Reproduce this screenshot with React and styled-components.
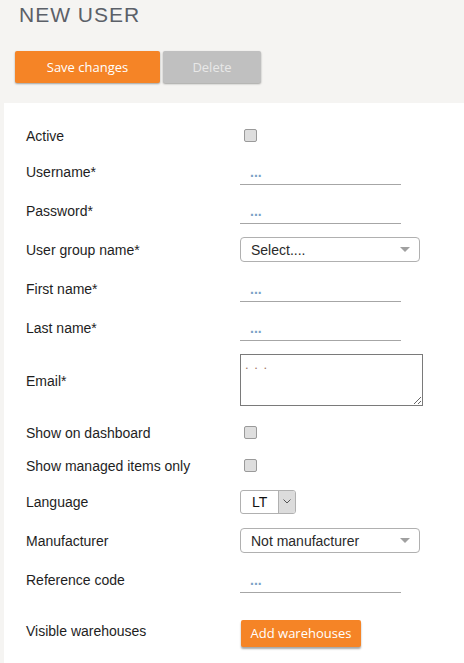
import styled, { createGlobalStyle } from "styled-components";

const GlobalStyle = createGlobalStyle`
  html, body {
    margin: 0;
    padding: 0;
    background: #f5f4f2;
  }
  body {
    font-family: "Liberation Sans", Arial, sans-serif;
  }
  #root {
    min-height: 663px;
    display: flex;
    flex-direction: column;
  }
`;

const fields = [
  { label: "Active", type: "check", h: 33 },
  { label: "Username*", type: "line" },
  { label: "Password*", type: "line" },
  { label: "User group name*", type: "select", value: "Select...." },
  { label: "First name*", type: "line" },
  { label: "Last name*", type: "line" },
  { label: "Email*", type: "area", h: 67 },
  { label: "Show on dashboard", type: "check", h: 33, top: 2 },
  { label: "Show managed items only", type: "check", h: 33 },
  { label: "Language", type: "lang" },
  { label: "Manufacturer", type: "select", value: "Not manufacturer" },
  { label: "Reference code", type: "line" },
  { label: "Visible warehouses", type: "button", top: 12 },
];

const Control = ({ field }) => {
  switch (field.type) {
    case "check":
      return <Check />;
    case "line":
      return <LineInput placeholder="..." />;
    case "select":
      return (
        <Select>
          <span>{field.value}</span>
          <Caret />
        </Select>
      );
    case "area":
      return <Area placeholder=". . ." />;
    case "lang":
      return (
        <LangSelect>
          <span>LT</span>
          <LangButton>
            <svg width="8" height="5" viewBox="0 0 8 5">
              <path d="M0.5 0.5 L4 4 L7.5 0.5" fill="none" stroke="#555" strokeWidth="1" />
            </svg>
          </LangButton>
        </LangSelect>
      );
    case "button":
      return <SmallButton>Add warehouses</SmallButton>;
    default:
      return null;
  }
};

const App = () => {
  return (
    <>
      <GlobalStyle />
      <Header>
        <Title>NEW USER</Title>
        <Toolbar>
          <PrimaryButton>Save changes</PrimaryButton>
          <DisabledButton>Delete</DisabledButton>
        </Toolbar>
      </Header>
      <Panel>
        {fields.map((f) => (
          <Row key={f.label} h={f.h} top={f.top}>
            <Label>{f.label}</Label>
            <Control field={f} />
          </Row>
        ))}
      </Panel>
    </>
  );
};

export default App;

const Header = styled.div`
  padding: 3px 0 0 15px;
`;

const Title = styled.h1`
  margin: 0 0 0 4px;
  font-family: "Liberation Sans", Arial, sans-serif;
  font-weight: normal;
  font-size: 21px;
  line-height: 24px;
  letter-spacing: 1px;
  color: #5b6068;
`;

const Toolbar = styled.div`
  display: flex;
  gap: 3px;
  margin-top: 24px;
  margin-bottom: 20px;
`;

const BaseButton = styled.button`
  border: none;
  border-radius: 2px;
  height: 32px;
  font-family: "Open Sans", "Liberation Sans", sans-serif;
  font-size: 13px;
  padding: 0;
  box-shadow: 0 1px 2px rgba(0, 0, 0, 0.35);
`;

const PrimaryButton = styled(BaseButton)`
  width: 145px;
  background: #f58426;
  color: #fff;
`;

const DisabledButton = styled(BaseButton)`
  width: 98px;
  background: #c0c0c0;
  color: #e8e8e8;
`;

const Panel = styled.div`
  flex: 1;
  background: #fff;
  margin-left: 4px;
  padding: 16px 0 0 22px;
`;

const Row = styled.div`
  display: flex;
  align-items: center;
  height: ${(p) => p.h || 39}px;
  margin-top: ${(p) => p.top || 0}px;
`;

const Label = styled.div`
  width: 214px;
  font-size: 14px;
  color: #1e1e1e;
`;

const Check = styled.span`
  box-sizing: border-box;
  width: 13px;
  height: 13px;
  margin-left: 4px;
  background: #dedede;
  border: 1px solid #9a9a9a;
  border-radius: 2px;
`;

const LineInput = styled.input`
  box-sizing: border-box;
  width: 161px;
  height: 24px;
  margin-top: 2px;
  padding: 0 0 0 10px;
  border: none;
  border-bottom: 1px solid #a6a6a6;
  outline: none;
  font-family: "Liberation Sans", Arial, sans-serif;
  font-size: 14px;
  &::placeholder {
    color: #7aa1c4;
    font-weight: bold;
  }
`;

const Select = styled.div`
  box-sizing: border-box;
  width: 180px;
  height: 25px;
  display: flex;
  align-items: center;
  justify-content: space-between;
  padding: 0 9px 0 10px;
  border: 1px solid #b0b0b0;
  border-radius: 4px;
  font-size: 14px;
  color: #2a2a2a;
`;

const Caret = styled.span`
  width: 0;
  height: 0;
  border-left: 5px solid transparent;
  border-right: 5px solid transparent;
  border-top: 5px solid #a0a0a0;
`;

const Area = styled.textarea`
  box-sizing: border-box;
  width: 183px;
  height: 52px;
  margin-top: -2px;
  padding: 2px 4px;
  border: 1px solid #7a7a7a;
  outline: none;
  font-family: "Liberation Sans", Arial, sans-serif;
  font-size: 13px;
  &::placeholder {
    color: #a07462;
    letter-spacing: 1px;
  }
`;

const LangSelect = styled.div`
  box-sizing: border-box;
  width: 56px;
  height: 24px;
  display: flex;
  align-items: stretch;
  border: 1px solid #b0b0b0;
  border-radius: 3px;
  overflow: hidden;
  font-size: 14px;
  color: #111;
  span {
    flex: 1;
    display: flex;
    align-items: center;
    padding-left: 11px;
  }
`;

const LangButton = styled.div`
  width: 16px;
  display: flex;
  align-items: center;
  justify-content: center;
  background: #dcdcdc;
  border-left: 1px solid #b0b0b0;
`;

const SmallButton = styled.button`
  width: 120px;
  height: 27px;
  margin-left: 1px;
  margin-top: 5px;
  padding: 0;
  border: none;
  border-radius: 2px;
  background: #f58426;
  color: #fff;
  font-family: "Open Sans", "Liberation Sans", sans-serif;
  font-size: 13px;
  box-shadow: 0 2px 2px rgba(0, 0, 0, 0.35);
`;
